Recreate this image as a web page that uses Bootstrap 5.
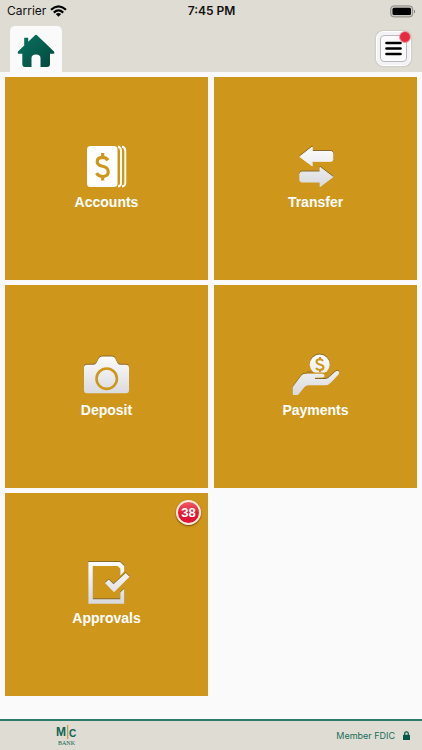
<!DOCTYPE html>
<html lang="en">
<head>
<meta charset="utf-8">
<meta name="viewport" content="width=device-width, initial-scale=1">
<title>M|C Bank</title>
<link rel="stylesheet" href="https://cdn.jsdelivr.net/npm/bootstrap@5.3.0/dist/css/bootstrap.min.css">
<style>
  body { font-family: "Liberation Sans", Arial, sans-serif; background: #fafafa; }
  .top-bar, .bottom-bar { background: #dfdcd3; }
  .status { height: 22px; padding: 0 6px 0 7px; font: 12px/22px Inter, sans-serif; color: #111; }
  .status .clock { font-weight: 600; }
  .tabs { height: 50px; padding: 4px 11px 0 10px; }
  .home-tab { width: 52px; height: 46px; padding-top: 4px; background: #fafafa; border-radius: 5px 5px 0 0; }
  .menu-btn { width: 35px; height: 35px; margin-top: 5px; border-radius: 7px; background: #f3f3f5; border: 1px solid #fff; box-shadow: 0 0 2px #aaa; }
  .menu-face { width: 27px; height: 27px; border-radius: 4px; background: #fbfbfb; border: 1px solid #b9b9bd; }
  .alert-dot { right: -1px; top: -1px; width: 12px; height: 12px; background: #e62b40; border: 1px solid #e9a3a8; }
  .tiles { display: grid; grid-template-columns: 1fr 1fr; gap: 5px 6px; padding: 5px; align-content: start; }
  .tile { aspect-ratio: 1; background: #ce971c; color: #fff; font-size: 14px; line-height: 20px; font-weight: 700; }
  .tile:hover { color: #fff; }
  .tile-icon { width: 61px; height: 47px; }
  .raised { filter: drop-shadow(0 -1px 0 #8a692a); }
  .count { right: 7px; top: 7px; width: 25px; height: 25px; border: 2px solid #fbe9df; background: linear-gradient(#ee5b67, #dd1734 60%); font-size: 13px; line-height: 21px; box-shadow: 0 1px 2px #6b4a08; }
  .bottom-bar { height: 31px; border-top: 2px solid #2c7c6c; padding: 0 12px 0 55px; color: #17705c; }
  .brand-logo { width: 24px; height: 24px; }
  .fdic { font: 9px/14px Inter, sans-serif; color: #17705c; }
</style>
<script src="https://cdn.jsdelivr.net/npm/bootstrap@5.3.0/dist/js/bootstrap.bundle.min.js"></script>
</head>
<body class="d-flex flex-column min-vh-100">
<svg width="0" height="0" class="position-absolute" aria-hidden="true">
  <defs>
    <linearGradient id="silver" x1="0" y1="0" x2="0" y2="47" gradientUnits="userSpaceOnUse">
      <stop offset="0" stop-color="#fff"/><stop offset="1" stop-color="#d4d5d9"/>
    </linearGradient>
  </defs>
</svg>

<header class="top-bar">
  <div class="status d-flex align-items-center">
    <div class="col d-flex align-items-center gap-1">Carrier
      <svg width="17" height="12" viewBox="0 0 17 12" aria-hidden="true"><g fill="none" stroke="#000" stroke-width="2.2"><path d="M1 4.8Q8.500-2 16 4.800"/><path d="M3.800 7.600Q8.500 3.300 13.200 7.600"/></g><path d="M8.500 11.800 5.800 9.100Q8.500 6.900 11.200 9.100Z"/></svg>
    </div>
    <div class="clock">7:45 PM</div>
    <div class="col d-flex justify-content-end">
      <svg width="26" height="13" viewBox="0 0 26 13" aria-hidden="true"><rect x=".7" y=".9" width="22" height="11" rx="3" fill="#c9c7c0" stroke="#8b8984"/><rect x="2.500" y="2.700" width="18.500" height="7.400" rx="1.500"/><path d="M24 4.500q2 2 0 4Z" fill="#777"/></svg>
    </div>
  </div>
  <nav class="tabs d-flex justify-content-between align-items-start">
    <a href="#" class="home-tab d-flex align-items-center justify-content-center" aria-label="Home">
      <svg width="38" height="34" viewBox="0 0 38 34" aria-hidden="true"><defs><linearGradient id="green" x2="1" y2="1"><stop stop-color="#087562"/><stop offset="1" stop-color="#04463c"/></linearGradient></defs><path fill="url(#green)" d="M18 1.200Q19 .5 20 1.200L37 17.500Q38 19.800 36.500 19.800H33V30Q33 33 30 33H23.500V24Q23.500 20.500 19 20.500T14.500 24V33H8Q5.300 33 5.300 30V19.800H1.500Q0 19.800 1 17.500L7.200 11.500V3.700H11.200V7.800Z"/></svg>
    </a>
    <button type="button" class="menu-btn position-relative p-0 d-flex align-items-center justify-content-center" aria-label="Menu">
      <span class="menu-face d-flex align-items-center justify-content-center">
        <svg width="17" height="15" viewBox="0 0 17 15" aria-hidden="true"><path d="M1.500 2H15.500M1.500 7.500H15.500M1.500 13H15.500" stroke="#000" stroke-width="2.600" stroke-linecap="round"/></svg>
      </span>
      <span class="alert-dot position-absolute rounded-circle"></span>
    </button>
  </nav>
</header>

<main class="tiles flex-grow-1">
  <a href="#" class="tile d-flex flex-column align-items-center justify-content-center text-decoration-none">
    <svg class="tile-icon" viewBox="0 0 61 47" aria-hidden="true"><rect x="11" y="1" width="30.500" height="41" rx="3.500" fill="#fff"/><g fill="none" stroke="#fff" stroke-width="1.900"><path d="M42 1.500Q45 2.500 45 6V38Q45 41 42 41.500"/><path d="M46 1.500Q49.300 2.500 49.300 6V38Q49.300 41 46 41.500"/></g><g fill="none" stroke="#ce971c" stroke-width="3.200"><path d="M32 15.200Q30 12.400 26.500 12.400 21.200 12.600 21.200 16.700 21.200 20 26.500 21.300 32.300 22.500 32.300 27 32 31.300 26.800 31.500 22.500 31.500 20.500 28.200"/><path d="M26.700 8V12.500M26.700 31V35.500"/></g></svg>
    <span>Accounts</span>
  </a>
  <a href="#" class="tile d-flex flex-column align-items-center justify-content-center text-decoration-none">
    <svg class="tile-icon raised" viewBox="0 0 61 47" aria-hidden="true"><g fill="url(#silver)" stroke="url(#silver)" stroke-width="1" stroke-linejoin="round"><path d="M14.800 11.700 27.200 2V6.500H46Q47.800 6.500 47.800 8.500V14.500Q47.800 16.300 46 16.300H27.200V21Z"/><path d="M47.800 32 35 22.300V27H16.800Q14.800 27 14.800 29V35Q14.800 37 16.800 37H35V41.700Z"/></g></svg>
    <span>Transfer</span>
  </a>
  <a href="#" class="tile d-flex flex-column align-items-center justify-content-center text-decoration-none">
    <svg class="tile-icon raised" viewBox="0 0 61 47" aria-hidden="true"><path fill="url(#silver)" d="M11 11.700H17.500Q19.500 11.700 20.500 9.800L23 5Q24 3.500 26 3.500H36Q38 3.500 39 5L41.300 9.800Q42.300 11.700 44 11.700H50Q53 11.700 53 14.700V37.300Q53 40.300 50 40.300H11Q8 40.300 8 37.300V14.700Q8 11.700 11 11.700Z"/><circle cx="30.700" cy="25.700" r="10.200" fill="none" stroke="#ce971c" stroke-width="2.600"/></svg>
    <span>Deposit</span>
  </a>
  <a href="#" class="tile d-flex flex-column align-items-center justify-content-center text-decoration-none">
    <svg class="tile-icon raised" viewBox="0 0 61 47" aria-hidden="true"><circle cx="34.700" cy="11.500" r="10" fill="url(#silver)"/><g fill="none" stroke="#ce971c" stroke-width="2"><path d="M38 8Q37 6.300 34.800 6.300 31.500 6.500 31.500 8.800 31.500 10.700 34.800 11.500 38.500 12.300 38.500 14.500 38.200 16.800 34.800 16.900 32 16.900 31 15"/><path d="M35 4V6.500M35 16.500V19.200"/></g><path fill="#ce971c" d="M22 19.500H39Q42 20 41 23H22Z"/><path fill="url(#silver)" d="M7.700 34 16.200 22.800Q17.800 20.800 20 20.700H37.500Q39.600 21 39.600 22.700 39.500 24.300 37.500 24.500L30 24.800V26H39.500Q42 26 43.500 24.800L50.800 18.300Q52.500 17 53.800 18.500 54.700 20 53.500 21.500L46 29.500Q43.500 32.300 40 32.300H23.500Q20.800 32.300 19.300 34.300L13 42H9Q7.700 42 7.700 40.500Z"/></svg>
    <span>Payments</span>
  </a>
  <a href="#" class="tile position-relative d-flex flex-column align-items-center justify-content-center text-decoration-none">
    <svg class="tile-icon raised" viewBox="0 0 61 47" aria-hidden="true"><g fill="url(#silver)"><path d="M12.300 1H44L48.200 5V10.500L44.300 14.500V7.500L41.500 5H16.800V38.300H44.300V31.500L48.200 27.700V42.700H12.300Z"/><path d="M29 22 32.800 18.500 37.500 23.300 49.800 12 53.500 15.800 38 31.200Z"/></g></svg>
    <span>Approvals</span>
    <span class="count position-absolute rounded-circle text-center">38</span>
  </a>
</main>

<footer class="bottom-bar d-flex align-items-center justify-content-between">
  <svg class="brand-logo" viewBox="0 0 24 24" role="img" aria-label="M|C Bank"><g font-weight="700" fill="#0c6555" font-family="Liberation Sans, sans-serif"><text x="1" y="12" font-size="12">M</text><text x="14" y="13" font-size="10">C</text></g><path d="M12.600 1V15" stroke="#c69c48" stroke-width="1.300"/><text x="3" y="21" font-family="Liberation Serif, serif" font-size="6" fill="#0c6555">BANK</text></svg>
  <div class="d-flex align-items-center gap-2">
    <a href="#" class="fdic text-decoration-none">Member FDIC</a>
    <svg width="7" height="9" viewBox="0 0 7 9" aria-hidden="true"><path d="M1.700 4V2.600Q1.700 .8 3.500 .8T5.300 2.600V4" fill="none" stroke="#075747" stroke-width="1.200"/><rect y="3.800" width="7" height="5.200" rx=".6" fill="#075747"/></svg>
  </div>
</footer>
</body>
</html>
